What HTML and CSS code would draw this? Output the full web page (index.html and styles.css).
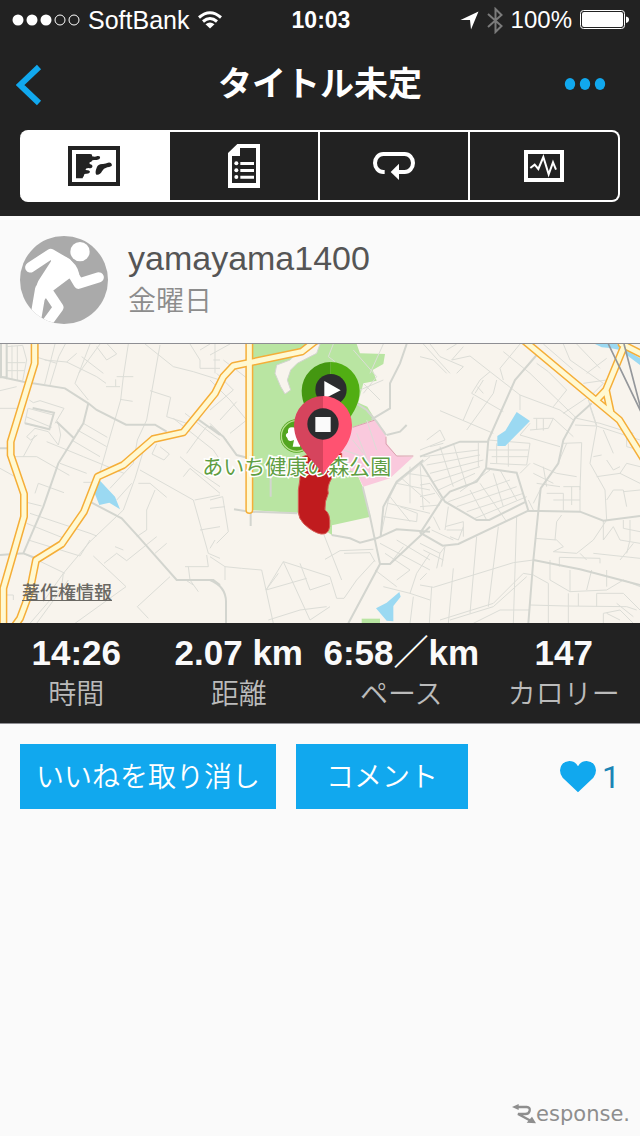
FILE: index.html
```
<!DOCTYPE html>
<html lang="ja">

<head>
  <meta charset="UTF-8" />
  <meta name="viewport" content="width=device-width, initial-scale=1.0" />
  <title>タイトル未定</title>
  <link rel="stylesheet" href="styles.css">
</head>

<body>

  <header>

    <div class="status">
      <div class="status-left">
        <svg width="68" height="12" viewBox="0 0 68 12" aria-hidden="true">
          <g fill="#fff">
            <circle cx="6" cy="6" r="5.5" />
            <circle cx="20" cy="6" r="5.5" />
            <circle cx="34" cy="6" r="5.5" />
          </g>
          <g fill="none" stroke="#fff">
            <circle cx="48" cy="6" r="5" />
            <circle cx="62" cy="6" r="5" />
          </g>
        </svg>
        <span class="carrier">SoftBank</span>
        <svg width="26" height="18" viewBox="0 0 26 18" aria-hidden="true">
          <g fill="none" stroke="#fff" stroke-width="3">
            <path d="M2 6.500Q13 -3 24 6.500" />
            <path d="M6 10.500Q13 4.500 20 10.500" />
          </g>
          <path d="M13 17.500L8.500 13.200Q13 10 17.500 13.200Z" fill="#fff" />
        </svg>
      </div>
      <time class="clock">10:03</time>
      <div class="status-right">
        <svg width="19" height="19" viewBox="0 0 19 19" aria-hidden="true">
          <path d="M18.500 0.500L11 18.500L10 9H0.500Z" fill="#fff" />
        </svg>
        <svg width="16" height="27" viewBox="0 0 16 27" aria-hidden="true">
          <path d="M1 7L14.500 19L8.500 25V2L14.500 8L1 20" fill="none" stroke="#7b7b7b" stroke-width="2" />
        </svg>
        <span>100%</span>
        <svg width="50" height="20" viewBox="0 0 50 20" aria-hidden="true">
          <rect x="0.500" y="0.500" width="44" height="18" rx="3" fill="none" stroke="#fff" />
          <rect x="2" y="2" width="41" height="15" rx="2" fill="#fff" />
          <path d="M46 6.500Q49 7 49 9.500T46 13Z" fill="#fff" />
        </svg>
      </div>
    </div>

    <div class="titlebar">
      <button class="icon-button" type="button" aria-label="戻る">
        <svg width="26" height="42" viewBox="0 0 26 42">
          <path d="M23 3L4 21L23 39" fill="none" stroke="#11a8ee" stroke-width="6" />
        </svg>
      </button>
      <h1>タイトル未定</h1>
      <button class="icon-button more" type="button" aria-label="メニュー">
        <svg width="42" height="14" viewBox="0 0 42 14">
          <g fill="#11a8ee">
            <ellipse cx="6" cy="6" rx="5.200" ry="6" />
            <ellipse cx="21" cy="6" rx="5.200" ry="6" />
            <ellipse cx="36" cy="6" rx="5.200" ry="6" />
          </g>
        </svg>
      </button>
    </div>

    <nav class="tabs">
      <button class="tab active" type="button" aria-label="地図">
        <svg width="52" height="40" viewBox="0 0 156 120">
          <rect x="6" y="6" width="144" height="108" fill="none" stroke="#222" stroke-width="12" />
          <g fill="#222">
            <path d="M24 24H66Q74 24 72 31Q82 34 88 30Q98 29 96 36Q94 42 80 42Q71 41 70 47Q63 47 65 54Q75 56 73 63Q70 68 62 66Q52 66 53 72Q66 72 66 78Q64 84 54 83Q46 84 48 90Q44 92 44 97H24Z" />
            <path d="M86 65Q90 53 105 54Q114 53 120 50Q130 48 132 57Q130 63 118 64Q106 67 102 76Q96 88 85 86Q80 80 86 65Z" />
          </g>
        </svg>
      </button>
      <button class="tab" type="button" aria-label="詳細">
        <svg width="32" height="44" viewBox="0 0 96 132">
          <path d="M28 0H96V132H0V27ZM36 12V36H12V117H84V12Z" fill="#fff" fill-rule="evenodd" />
          <g fill="#fff">
            <circle cx="25" cy="58" r="6" />
            <circle cx="25" cy="79" r="6" />
            <circle cx="25" cy="99" r="6" />
            <path d="M37 54h41v9h-41zM37 75h41v9h-41zM37 95h41v9h-41z" />
          </g>
        </svg>
      </button>
      <button class="tab" type="button" aria-label="ラップ">
        <svg width="42" height="28" viewBox="0 0 126 84">
          <path d="M35 60H31A25 27 0 0 1 31 6H95A25 27 0 0 1 95 60H72" fill="none" stroke="#fff" stroke-width="12" />
          <path d="M53 60L78 35V84Z" fill="#fff" />
        </svg>
      </button>
      <button class="tab" type="button" aria-label="グラフ">
        <svg width="40" height="32" viewBox="0 0 120 96">
          <rect x="6" y="6" width="108" height="84" fill="none" stroke="#fff" stroke-width="12" />
          <path d="M19 54L32 44L43 57L58 21L74 73L87 37L96 59" fill="none" stroke="#fff" stroke-width="6" />
        </svg>
      </button>
    </nav>

  </header>

  <main>

    <section class="profile">
      <svg class="avatar" viewBox="60 48 264 264" aria-hidden="true">
        <defs>
          <clipPath id="face">
            <circle cx="192" cy="180" r="132" />
          </clipPath>
        </defs>
        <g clip-path="url(#face)">
          <rect x="60" y="48" width="264" height="264" fill="#aaa" />
          <circle cx="240" cy="95" r="29" fill="#fff" />
          <g fill="none" stroke="#fff" stroke-width="31" stroke-linecap="round" stroke-linejoin="round">
            <path d="M91 142L152 102L200 130L236 191L296 172" />
            <path d="M137 205L175 262L140 310" />
            <path d="M122 208L108 290" stroke-width="34" />
          </g>
          <path d="M152 96L200 113Q232 130 238 163L207 176L155 215L128 245L106 218Q108 190 121 173L153 124Z" fill="#fff" />
        </g>
      </svg>
      <div>
        <h2>yamayama1400</h2>
        <p class="day">金曜日</p>
      </div>
    </section>

    <section class="map">
      <svg class="map-canvas" viewBox="0 0 1920 837" preserveAspectRatio="xMidYMid slice">
        <rect width="1920" height="837" fill="#f8f4ed" />

        <!-- west -->
        <g transform="translate(0 -12)">
          <g class="lane">
            <path d="M20 12V118M0 110H20M20 20L68 16L80 60L68 122M20 68H76M36 16V118M52 18V120M20 92H72M0 152L50 140M0 205H60" />
            <path d="M165 12L134 132M196 12L176 50L150 135M134 60L200 66L230 40M112 52L170 70M270 12L225 130L265 180M300 12L236 100M245 50L310 100M290 20L320 60L350 42L322 12M200 66L290 110L318 130M318 140H360M347 118V140M385 12L370 110L362 180L330 290L296 410" />
            <path d="M435 12L520 80L580 95L660 120M480 15L440 240L412 300L400 370L330 445M570 12L600 60V85H660M600 30L630 12M640 60H660M350 110H400M360 178L398 184M450 152L512 172L500 230L560 250" />
            <path d="M88 180L100 188L120 182L192 205L165 250M85 205L160 225M78 230L155 262M74 250L150 268M84 205L74 250M80 290L105 265L145 275L175 315L182 285L175 250M80 290L92 300L112 285M105 285L70 350M140 305L250 350L372 400M232 270L320 320M250 250L322 292M215 300L300 350M40 350H110L208 406M0 385L45 410M105 460L115 430L192 458M72 485L125 498M80 550L205 600M90 520L270 580L290 588M250 427H290M180 370L260 400" />
            <path d="M555 220L660 300M520 235L640 330L660 360M480 320L508 342L492 360L456 342L470 312M540 350L580 385L660 440M560 340L600 285L620 260M550 410L570 385L660 460M440 300L405 415L370 510L270 605L190 700L130 785M415 430L450 430L500 472M465 450L440 510V570L410 590M395 430L350 480M420 390L580 480L625 640L660 655M584 480L660 465M600 570L660 560" />
            <path d="M85 600L240 648L270 600M70 640L195 700M280 648L378 740L225 850M312 670L350 640L380 662L470 590M345 620L370 630M465 640L500 610M510 710L412 800L445 835M555 680H625L620 645M565 680L570 720L595 755M190 700L185 740L90 850M205 720L110 850M0 765H40V780M580 735L560 722" />
          </g>
          <g class="street">
            <path d="M0 110L70 125L195 145L265 190L290 210L378 254H465L500 275M265 190L250 250L175 370L130 500L70 640L0 645M70 640L110 655M275 488L365 535L415 590L530 720L640 720L660 735M75 250L148 268L162 218L98 204M0 325H35M170 245L222 295M20 12V115M3 12V115M590 235L660 285" />
          </g>
          <path d="M298 420L345 470L360 508L328 488L298 495L284 460Z" fill="#9bd9f2" />
        </g>

        <!-- park and surroundings -->
        <g transform="translate(630 -12)">
          <path d="M118 12H440L450 40L525 42L520 72L488 90L500 122L460 130L445 188L472 200L495 238L428 262L440 400L458 440L482 530L366 556V585L265 520L118 510Z" fill="#b9e5a2" />
          <path d="M240 60L200 75L195 100L212 140L225 162L242 150L232 120L242 90L262 70L320 40L330 12H290Z" fill="#f8f4ed" stroke="#d3d5cf" stroke-width="3" />
          <path d="M428 262L495 240L525 275L530 310L560 348L610 350L540 415L460 440L440 400L370 370Z" fill="#fac9dd" />
          <path d="M428 262L495 240M528 290V312L560 348H610" fill="none" stroke="#d9a3ae" stroke-width="3" />
          <g class="lane">
            <path d="M15 0V100M0 45L60 12M0 120L60 180L110 240M20 100L70 150M40 60L118 120M0 210L70 150M30 240L80 185M60 280L110 240M0 250L50 300M0 480L38 470L55 575L20 610M0 505L45 500M0 625L15 600M0 650L45 680L95 685L155 690L190 850M45 680V720M168 750L220 665L360 710L380 775L402 775L440 720L495 660M220 665L300 840L360 800M175 840L270 810L350 800M205 700L168 750L290 715M270 670L300 750L360 730M342 585L395 720M345 658L390 632L490 628M402 640L480 638L495 665" />
            <path d="M370 12L355 50L375 65M430 30L500 110L460 160M520 12L480 100M460 130L510 180M450 150L520 120M428 300L460 340M440 280L480 380M470 240L500 330M400 330L460 350" />
            <path d="M512 590L535 480L560 430L660 350M535 490L660 520M560 430L660 450M590 400L660 410M575 415L660 490M520 530L620 545L622 520L570 500M600 380V490M630 370L640 510M540 470L600 545M495 690L560 740M525 640L600 690L560 720M560 600L660 660M510 610L660 690M600 760L620 700L660 640M580 620L540 670M520 740L600 760L660 780M600 850L610 770" />
          </g>
          <g class="street">
            <path d="M590 12L570 70L540 130V205L485 238M430 185L470 210L500 245L528 285M530 285L570 275L590 255M0 258L40 290L80 345L118 355M72 508L118 515L262 520M122 510V558M182 405V470M365 585L420 595L450 608L500 595L560 568L660 575M458 440L480 530L510 672L415 850M512 590L520 500L560 425L640 360M0 720Q50 740 48 790V850M510 672H540L660 560" />
          </g>
          <path d="M568 756L572 770L550 798V844L530 842L498 805L530 788Z" fill="#9bd9f2" />
          <path d="M455 836H510V860H455Z" fill="#b9e5a2" />
        </g>

        <!-- east -->
        <g transform="translate(1260 -12)">
          <g class="lane">
            <path d="M0 50L40 60L80 100M10 12L90 100M30 12L60 50L130 80L110 100M95 60L150 48L210 95L300 165M95 60L130 20M80 30L110 12M210 95L180 120L155 160L250 215M230 120L220 160L140 270M190 120L165 160M172 140L190 160M60 212L220 280M250 35L330 100L470 235L540 250L620 275L640 280M240 85L250 120M300 12L240 85M350 70L385 95L440 150L400 200M370 12L460 90M430 12L450 60L550 130L520 160L430 220M470 12L540 85M500 100L560 55M560 120L490 130M300 165L380 195L420 210L460 240M300 165L300 210M160 170L130 240" />
            <path d="M340 235H400L385 265L330 270M350 235V270M370 235V272M400 235L460 290M300 285L420 320M330 250L300 285M205 300L330 310L320 375L210 370M205 330H325M215 350H325M230 310V370M265 310V380M175 308V380M10 350L175 330M20 375L180 345M30 400L190 360M40 425L180 380M55 450L165 400M100 310L140 440M60 320L100 440M0 330L75 300L60 270L20 300M30 320L70 310M0 435L30 430L65 480M0 470L45 460M0 500L60 495" />
            <path d="M85 485L270 420M110 500L290 440M140 515L310 460M165 535L320 470M120 455L210 390M180 430L260 545M220 400L250 500M240 390L290 480M150 450L200 540M300 400L330 370M340 370L410 400L470 410M340 400L400 430M350 430L420 440M370 380L380 440M430 310L485 308L480 450M440 310L410 380M380 460H430V510M400 480H480M430 440H480V515M455 440V495M360 450L340 490M325 480L340 510M530 255L505 180M510 200L530 260L510 370L555 450L560 540M465 255L530 258L660 300M550 270L580 340M620 280V320L660 330M530 410L600 400L660 430M560 360L580 390L600 380M520 350L545 345M580 450H610L620 500M560 480L580 450M610 455L660 450M600 400L620 370L660 380" />
            <path d="M85 500L75 570M75 560L130 545V590M80 570H130M90 590L115 600L130 560M60 570L40 530M35 570L100 600M0 610L60 640L50 685M10 630L70 660M60 640L75 620L65 680M235 560L205 800M290 530L280 850M170 590L150 820M100 685L85 850M35 740L28 850M0 735L40 742L280 668L340 660M0 720L20 700M345 595L410 600L430 620L400 635L470 640L520 600L560 540M405 600L410 545L425 525M480 640L500 660M418 680V652L540 655V670M520 640L660 655M550 540V600L580 560L600 600L660 610M610 540V565L660 575M630 540V600L620 640M390 660V720L450 755L560 750L610 720L660 740M450 690V755M515 690L500 750M560 690V740M600 660L640 610M60 840L220 790L310 700L340 705L385 730V850M90 840L220 800L320 710M330 795L440 798L620 800L650 810M445 760V850M475 760V798M530 800V760H610L660 810M550 850V820L600 810L640 850M590 790L640 830M160 850L240 810H330M560 820L600 840" />
          </g>
          <g class="street">
            <path d="M350 45L285 120L205 300L198 385L290 398L325 512L480 515L550 542L660 528M0 350L120 305H205M0 365L75 485L170 540H208L318 485M198 385L170 425L90 455L65 480L0 580M0 578L68 617L115 612L325 512M515 190L465 235L430 300L415 370L362 445L340 660L325 850M340 660L480 688M480 688L660 735" />
          </g>
          <path d="M290 216L330 243L256 318H232V288L256 272Z" fill="#9bd9f2" />
          <path d="M525 12H590L660 55V75L600 30L570 24L545 22Z" fill="#9bd9f2" />
        </g>

        <!-- main roads, casing first -->
        <g class="road">
          <path d="M104 -12V58L32 293V333L72 450V518L10 733V848" />
          <path d="M950 -12L905 23L700 66L670 98L645 148L550 265L460 285L370 363L293 398L252 503L185 600L108 648L88 748L60 823L35 858" />
          <path d="M748 -12V498" />
          <path d="M1570 -12L1858 228L1930 343M1832 203L1818 138L1875 0M1790 168L1818 138M1865 0L1930 33" />
        </g>
        <g class="road-fill">
          <path d="M104 -12V58L32 293V333L72 450V518L10 733V848" />
          <path d="M950 -12L905 23L700 66L670 98L645 148L550 265L460 285L370 363L293 398L252 503L185 600L108 648L88 748L60 823L35 858" />
          <path d="M748 -12V498" />
          <path d="M1570 -12L1858 228L1930 343M1832 203L1818 138L1875 0M1790 168L1818 138M1865 0L1930 33" />
        </g>
        <path d="M1825 0L1930 218M1872 0L1930 223" fill="none" stroke="#94979b" stroke-width="5" />

        <!-- route, label and pins -->
        <g transform="translate(630 -12)">
          <circle cx="260" cy="288" r="50" fill="#53a51f" />
          <circle cx="260" cy="288" r="46" fill="none" stroke="#b6df8d" stroke-width="4" />
          <path d="M248 320L252 300Q234 308 232 294Q222 284 234 278Q232 262 246 262Q262 262 260 278L275 295L270 320Z" fill="#fff" />
          <path d="M278 350Q320 330 395 340Q400 380 365 415Q350 440 355 460Q343 485 345 510Q362 520 359 560Q355 585 333 582Q310 578 282 552Q265 535 265 515V450Q272 420 270 380Z" fill="#c01b1e" stroke="#d65b55" stroke-width="3" />
          <text class="place" x="-23" y="403">あいち健康の森公園</text>

          <path d="M362 310C345 270 275 225 275 152A87 87 0 0 1 362 66Z" fill="#449711" />
          <path d="M362 310C379 270 449 225 449 152A87 87 0 0 0 362 66Z" fill="#51ae13" />
          <circle cx="363" cy="149" r="47" fill="#2b2c2e" />
          <path d="M343 123L392 151L343 176Z" fill="#fff" />

          <path d="M339 405C315 360 252 325 252 255A87 87 0 0 1 339 168Z" fill="#d6445d" />
          <path d="M339 405C363 360 426 325 426 255A87 87 0 0 0 339 168Z" fill="#ff5271" />
          <circle cx="339" cy="252" r="47" fill="#2b2c2e" />
          <path d="M316 231H362V276H316Z" fill="#fafafa" />
        </g>
      </svg>
      <a class="legal" href="#legal">著作権情報</a>
    </section>

    <dl class="stats">
      <div>
        <dt>時間</dt>
        <dd>14:26</dd>
      </div>
      <div>
        <dt>距離</dt>
        <dd>2.07 km</dd>
      </div>
      <div>
        <dt>ペース</dt>
        <dd>6:58／km</dd>
      </div>
      <div>
        <dt>カロリー</dt>
        <dd>147</dd>
      </div>
    </dl>

    <div class="actions">
      <button class="btn" type="button">いいねを取り消し</button>
      <button class="btn" type="button">コメント</button>
      <a class="likes" href="#likes">
        <svg width="36" height="32" viewBox="0 0 108 96" aria-hidden="true">
          <path d="M54 94L8 50Q0 40 0 28Q2 2 28 0Q46 0 54 16Q62 0 80 0Q106 2 108 28Q108 40 100 50Z" fill="#11a8ee" />
        </svg>
        <span>1</span>
      </a>
    </div>

  </main>

  <footer>
    <svg width="24" height="20" viewBox="0 0 72 60" aria-hidden="true">
      <path d="M14 9H44Q55 10 53 20Q51 30 40 30H18L56 50" fill="none" stroke="#8e8e8e" stroke-width="7" />
      <path d="M0 9L20 0V18ZM60 38L72 58L44 56Z" fill="#8e8e8e" />
    </svg>
    <span>esponse.</span>
  </footer>

</body>

</html>
```
FILE: styles.css
```
* {
  box-sizing: border-box;
  margin: 0;
  padding: 0;
}
:root {
  --dark: #222;
  --bg: #fafafa;
  --accent: #11a8ee;
}
body,
button {
  font-family: "Liberation Sans", "Noto Sans CJK JP", sans-serif;
}
body {
  background-color: var(--bg);
  display: flex;
  flex-direction: column;
  min-height: 100vh;
  overflow-x: hidden;
}
button {
  border: 0;
  cursor: pointer;
}
svg {
  display: block;
  flex-shrink: 0;
}

/* Header */
header {
  background-color: var(--dark);
  color: #fff;
  height: 216px;
}
.status {
  display: grid;
  grid-template-columns: 1fr auto 1fr;
  align-items: center;
  height: 40px;
  padding: 0 10px 0 12px;
  font-size: 24px;
  line-height: 40px;
}
.status-left,
.status-right {
  display: flex;
  align-items: center;
  gap: 8px;
}
.carrier {
  font-size: 25px;
}
.status-right {
  justify-content: flex-end;
}
.clock {
  font-size: 23px;
  font-weight: bold;
}
.titlebar {
  display: grid;
  grid-template-columns: 1fr auto 1fr;
  align-items: center;
  height: 90px;
  padding: 0 16px;
}
.titlebar h1 {
  font-size: 34px;
  font-weight: 700;
  line-height: 40px;
  padding-bottom: 2px;
}
.icon-button {
  display: flex;
  align-items: center;
  width: 60px;
  height: 60px;
  background: none;
}
.more {
  justify-self: end;
}
.tabs {
  display: flex;
  height: 72px;
  margin: 0 20px;
}
.tab {
  display: flex;
  flex: 1;
  align-items: center;
  justify-content: center;
  background: none;
  border: 2px solid #fff;
  border-left: 0;
}
.tab:first-child {
  border-radius: 8px 0 0 8px;
}
.tab:last-child {
  border-radius: 0 8px 8px 0;
}
.tab.active {
  background-color: #fff;
}

/* Profile */
.profile {
  display: flex;
  align-items: center;
  gap: 20px;
  height: 128px;
  padding: 0 20px;
  border-bottom: 1px solid #8e8e93;
}
.avatar {
  width: 88px;
  height: 88px;
}
.profile h2 {
  color: #555;
  font-size: 34px;
  font-weight: normal;
  line-height: 44px;
}
.day {
  color: #8c8c8c;
  font-size: 28px;
  font-weight: 350;
  line-height: 44px;
}

/* Map */
.map {
  position: relative;
}
.map-canvas {
  width: 100%;
  height: 279px;
}
.lane {
  fill: none;
  stroke: #dcddd7;
  stroke-width: 3;
}
.street {
  fill: none;
  stroke: #d3d5cf;
  stroke-width: 6;
}
.road {
  fill: none;
  stroke: #f5ae38;
  stroke-width: 24;
  stroke-linejoin: round;
  stroke-linecap: round;
}
.road-fill {
  fill: none;
  stroke: #fff9d2;
  stroke-width: 15;
  stroke-linejoin: round;
  stroke-linecap: round;
}
.place {
  fill: #5f9e43;
  stroke: #fff;
  stroke-width: 9;
  paint-order: stroke;
  font-family: "Noto Sans CJK JP", sans-serif;
  font-size: 63px;
}
.legal {
  position: absolute;
  bottom: 18px;
  left: 22px;
  color: #6a6863;
  font-size: 18px;
  font-weight: 500;
  line-height: 24px;
}

/* Stats */
.stats {
  display: grid;
  grid-template-columns: repeat(4, 1fr);
  height: 101px;
  padding-top: 8px;
  margin: 0 -5px;
  background-color: var(--dark);
  border-bottom: 1px solid #8e8e93;
  text-align: center;
  white-space: nowrap;
}
.stats div {
  display: flex;
  flex-direction: column-reverse;
  justify-content: flex-end;
}
.stats dt {
  color: #bbb;
  font-size: 28px;
  font-weight: 350;
  line-height: 40px;
}
.stats dd {
  color: var(--bg);
  font-size: 35px;
  font-weight: bold;
  line-height: 44px;
}

/* Actions */
.actions {
  display: flex;
  align-items: center;
  gap: 20px;
  padding: 20px;
}
.btn {
  min-width: 172px;
  height: 65px;
  padding: 0 16px 4px;
  background-color: var(--accent);
  color: #fff;
  font-size: 28px;
  font-weight: 350;
}
.likes {
  display: flex;
  align-items: center;
  gap: 6px;
  margin-left: auto;
  color: #1b84b5;
  font-family: Roboto, sans-serif;
  font-size: 32px;
  text-decoration: none;
}

footer {
  display: flex;
  align-items: center;
  justify-content: flex-end;
  height: 44px;
  margin-top: auto;
  padding-right: 10px;
  color: #8e8e8e;
  font-family: "DejaVu Sans", sans-serif;
  font-size: 21px;
}
```
